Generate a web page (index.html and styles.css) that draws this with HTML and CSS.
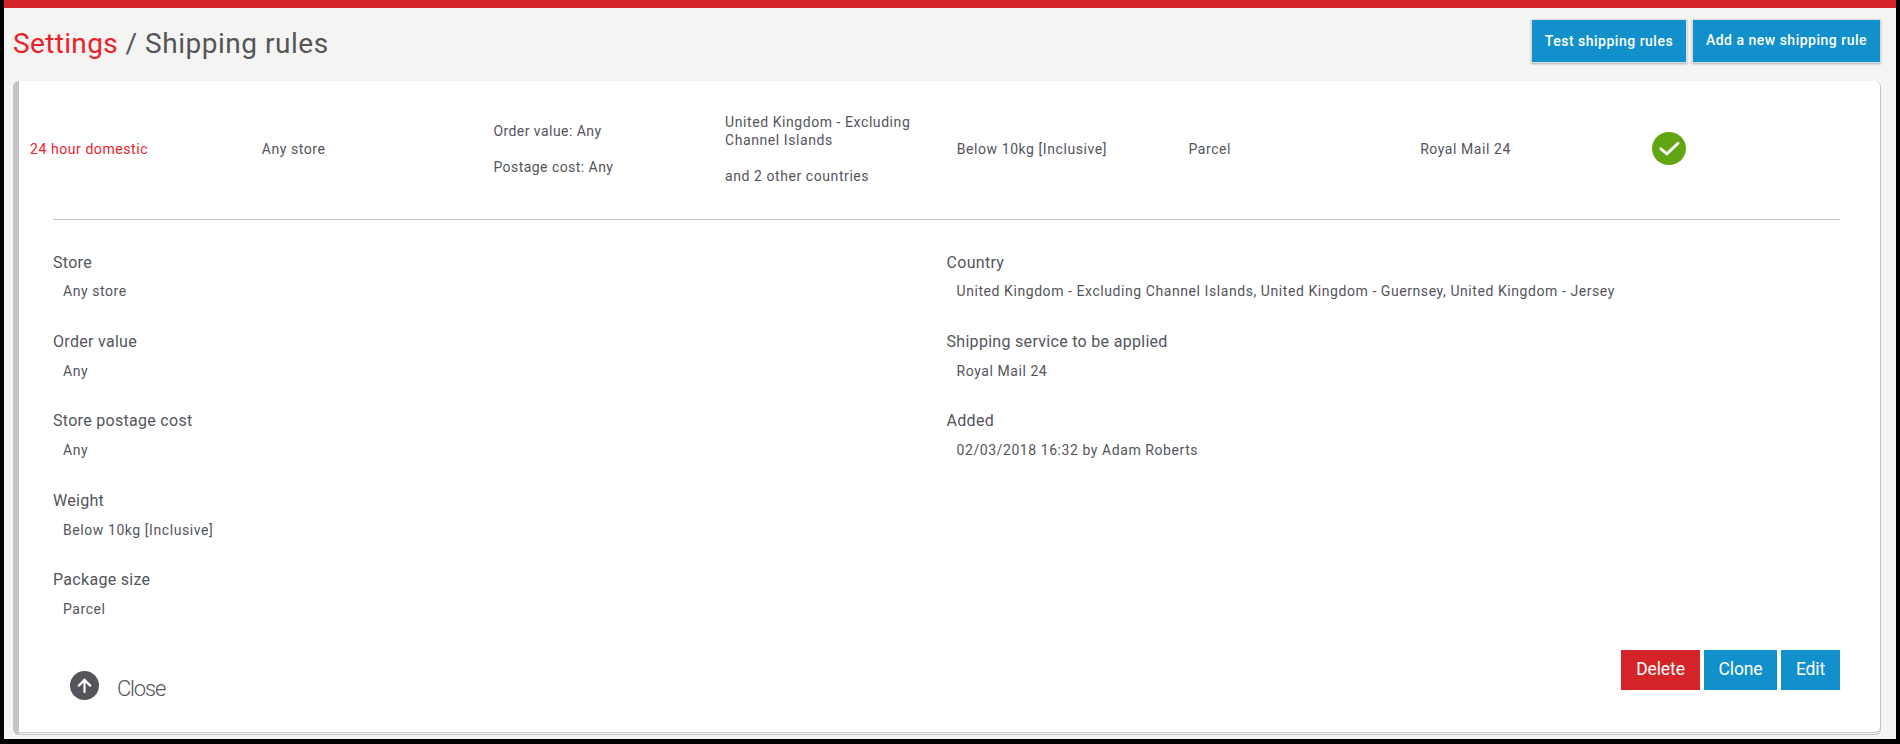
FILE: index.html
```
<!DOCTYPE html>
<html lang="en">
<head>
<meta charset="utf-8">
<title>Shipping rules</title>
<link rel="stylesheet" href="styles.css">
</head>
<body>
<div class="page">
  <header class="header">
    <h1 class="title"><a class="title-link">Settings</a> / Shipping rules</h1>
    <div class="header-actions">
      <button class="btn btn-test">Test shipping rules</button>
      <button class="btn btn-add">Add a new shipping rule</button>
    </div>
  </header>
  <main class="card">
    <div class="card-body">
      <div class="rule">
        <div class="cell rule-name">24 hour domestic</div>
        <div class="cell">Any store</div>
        <div class="cell cell-costs"><p>Order value: Any</p><p>Postage cost: Any</p></div>
        <div class="cell"><p>United Kingdom - Excluding<br>Channel Islands</p><p>and 2 other countries</p></div>
        <div class="cell">Below 10kg [Inclusive]</div>
        <div class="cell">Parcel</div>
        <div class="cell">Royal Mail 24</div>
        <div class="cell"><svg class="tick" viewBox="0 0 34 34"><ellipse cx="17" cy="16.5" rx="17" ry="16.5" fill="#62a512"/><path d="M8.8 16.8l6.2 5L26 11.3" fill="none" stroke="#fff" stroke-width="2.8" stroke-linecap="round" stroke-linejoin="miter"/></svg></div>
      </div>
      <div class="details">
        <dl class="column">
          <div class="field"><dt>Store</dt><dd>Any store</dd></div>
          <div class="field"><dt>Order value</dt><dd>Any</dd></div>
          <div class="field"><dt>Store postage cost</dt><dd>Any</dd></div>
          <div class="field"><dt>Weight</dt><dd>Below 10kg [Inclusive]</dd></div>
          <div class="field"><dt>Package size</dt><dd>Parcel</dd></div>
        </dl>
        <dl class="column">
          <div class="field"><dt>Country</dt><dd>United Kingdom - Excluding Channel Islands, United Kingdom - Guernsey, United Kingdom - Jersey</dd></div>
          <div class="field"><dt>Shipping service to be applied</dt><dd>Royal Mail 24</dd></div>
          <div class="field"><dt>Added</dt><dd>02/03/2018 16:32 by Adam Roberts</dd></div>
        </dl>
      </div>
      <footer class="footer">
        <a class="close"><svg class="arrow" viewBox="0 0 29 29"><circle cx="14.5" cy="14.5" r="14.5" fill="#55545a"/><path d="M14.5 21V9M8.8 14.6l5.7-5.7 5.7 5.7" fill="none" stroke="#fff" stroke-width="2.2" stroke-linecap="round"/></svg><span class="close-text">Close</span></a>
        <div class="actions">
          <button class="action action-delete">Delete</button>
          <button class="action action-clone">Clone</button>
          <button class="action action-edit">Edit</button>
        </div>
      </footer>
    </div>
  </main>
</div>
</body>
</html>
```
FILE: styles.css
```
* { box-sizing: border-box; }
body {
  margin: 0;
  height: 744px;
  padding: 0 4px 5px;
  background: #000;
  color: #54555b;
  font: 14px/18px Roboto, "Liberation Sans", sans-serif;
  letter-spacing: .57px;
  overflow: hidden;
}
.page {
  height: 739px;
  padding: 0 15px 0 9px;
  border-top: 8px solid #d42429;
  background: #f4f4f2;
}
.header {
  display: flex;
  justify-content: space-between;
  height: 73px;
}
.title {
  margin: 20px 0 0;
  font-size: 28px;
  line-height: 32px;
  font-weight: 400;
  letter-spacing: .52px;
}
.title-link { color: #eb2229; letter-spacing: .35px; }
.header-actions { display: flex; gap: 5px; margin-top: 11px; }
.btn {
  height: 44px;
  padding: 0;
  border: 1px solid #d9dfe1;
  background: #1190cb;
  box-shadow: 0 1px 2px rgba(60, 70, 90, .4);
  color: #fff;
  font: 500 14px/18px Roboto, sans-serif;
  letter-spacing: .5px;
}
.btn-test { width: 156px; }
.btn-add { width: 189px; padding-bottom: 2px; }
.card {
  height: 654px;
  padding-bottom: 1px;
  border: solid #c0c5c8;
  border-width: 0 1px 1px 6px;
  border-radius: 6px;
  background: #f4f4f2;
}
.card-body {
  height: 652px;
  padding: 0 40px 0 34px;
  border-bottom: 1px solid #c0c5c8;
  border-radius: 0 6px 6px 0;
  background: #fff;
}
.rule {
  display: grid;
  grid-template-columns: repeat(8, 231.7px);
  align-items: center;
  height: 138px;
  margin: 0 -33px;
  padding-bottom: 2px;
}
.cell { padding-left: 10px; }
.cell p { margin: 0 0 18px; }
.cell p:last-child { margin-bottom: 0; }
.cell-costs { letter-spacing: .45px; }
.rule-name { color: #eb2229; }
.tick { display: block; width: 34px; height: 34px; }
.details {
  display: grid;
  grid-template-columns: 1fr 1fr;
  height: 417px;
  padding-top: 32.6px;
  border-top: 1px solid #c2c3c5;
}
.column { margin: 0; }
.field { height: 79.4px; }
.field dt { font-size: 16px; line-height: 20px; letter-spacing: .3px; }
.field dd { margin: 9.75px 0 0 10px; }
.footer { display: flex; justify-content: space-between; align-items: flex-start; padding-top: 14px; }
.close { display: flex; align-items: flex-start; margin: 21px 0 0 17px; }
.arrow { width: 29px; height: 29px; }
.close-text { margin: 5px 0 0 18px; font-size: 22px; line-height: 26px; font-weight: 300; letter-spacing: -1.2px; }
.actions { display: flex; gap: 4px; }
.action {
  height: 40px;
  padding: 0 0 2px;
  border: 0;
  background: #1190cb;
  color: #fff;
  font: 400 17.5px/20px Roboto, sans-serif;
  letter-spacing: -.1px;
}
.action-delete { width: 79px; background: #d42429; }
.action-clone { width: 73px; }
.action-edit { width: 59px; }
```
